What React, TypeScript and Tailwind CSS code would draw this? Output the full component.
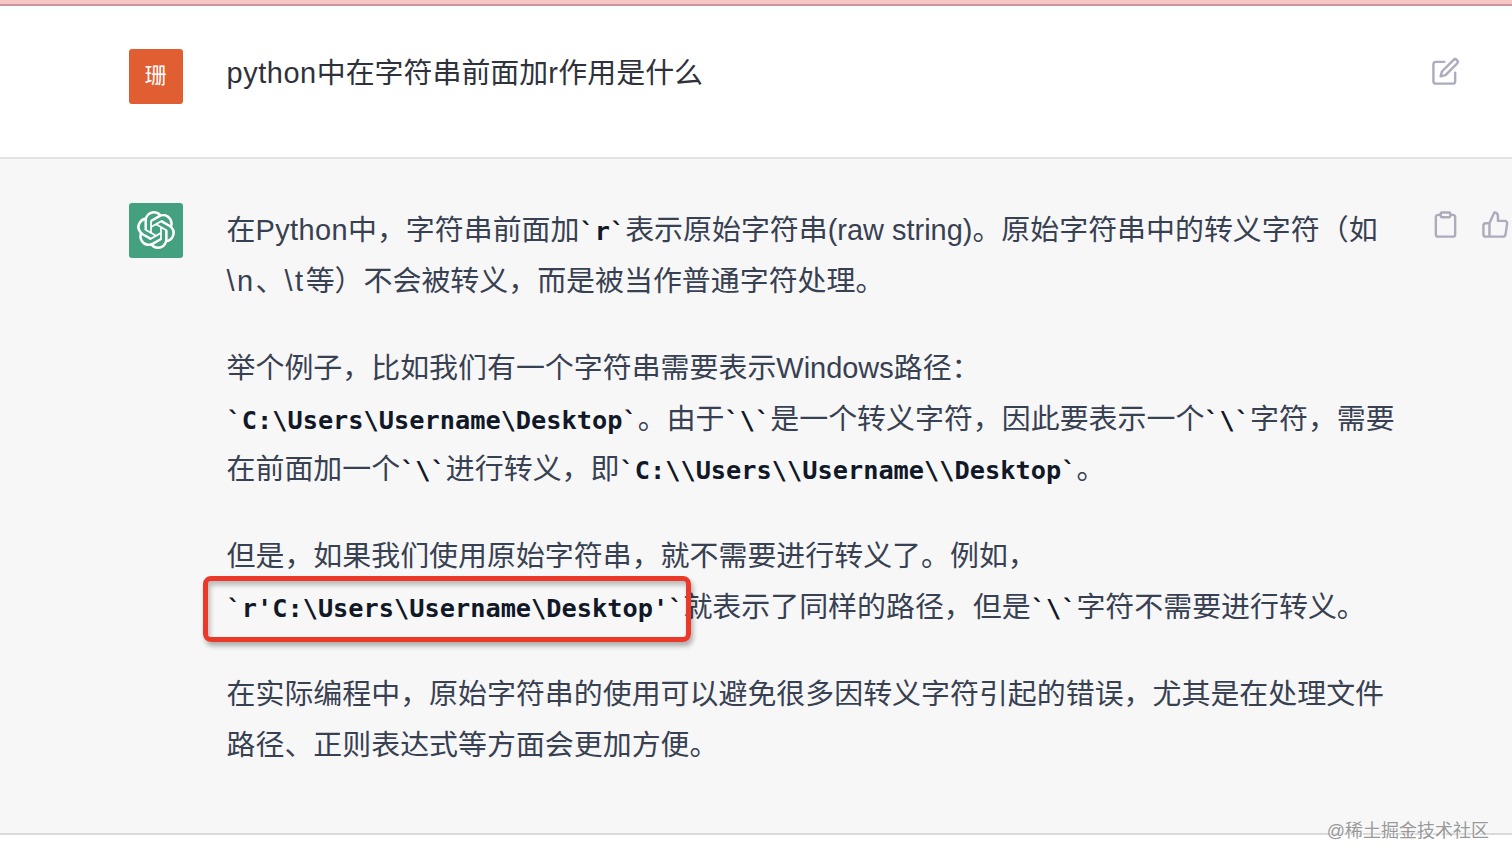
import type { ReactNode } from 'react';
import { SiOpenai } from 'react-icons/si';

interface IconProps {
  className?: string;
  children: ReactNode;
}

function Icon({ className, children }: IconProps) {
  return (
    <svg
      viewBox="0 0 24 24"
      fill="none"
      stroke="currentColor"
      strokeWidth="2"
      strokeLinecap="round"
      strokeLinejoin="round"
      className={`size-[29px] shrink-0 ${className ?? ''}`}
    >
      {children}
    </svg>
  );
}

function Code({ children }: { children: string }) {
  return (
    <code className="font-['DejaVu_Sans_Mono',monospace] text-[25.3px] leading-none font-bold text-[#111827]">
      {'`' + children + '`'}
    </code>
  );
}

function Line({ children }: { children: ReactNode }) {
  return <span className="block h-[50.8px] whitespace-nowrap">{children}</span>;
}

export default function App() {
  return (
    <div className="relative h-[864px] w-full overflow-hidden bg-white font-['Liberation_Sans','Noto_Sans_CJK_SC',sans-serif] text-[28.95px] leading-[50.8px]">
      <div className="h-[6px] border-b-2 border-[#c9979a] bg-[#f6c6c4]" />

      <section className="flex h-[153px] border-b-2 border-[#e2e2e4] pl-[128.5px] text-[#2f323b]">
        <div className="mt-[43px] flex size-[54.5px] shrink-0 items-center justify-center rounded-[3px] bg-[#e05e31] text-[22px] text-white">
          珊
        </div>
        <p className="mt-[41.5px] ml-[43.5px] w-[1204px] whitespace-nowrap">
          <span className="tracking-[0.55px]">python</span>中在字符串前面加<span className="tracking-[0.5px]">r</span>
          作用是什么
        </p>
        <Icon className="mt-[50.5px] text-[#acacbe]">
          <path d="M11 4H4a2 2 0 0 0-2 2v14a2 2 0 0 0 2 2h14a2 2 0 0 0 2-2v-7" />
          <path d="M18.5 2.5a2.121 2.121 0 0 1 3 3L12 15l-4 1 1-4 9.5-9.5z" />
        </Icon>
      </section>

      <section className="flex h-[676px] border-b-2 border-[#dadadc] bg-[#f7f7f8] pl-[128.5px] text-[#374151]">
        <div className="mt-[44px] flex size-[54.5px] shrink-0 items-center justify-center rounded-[3px] bg-[#43a17f] text-white">
          <SiOpenai className="size-[38px]" />
        </div>

        <div className="mt-[46px] ml-[43.5px] flex w-[1204px] shrink-0 flex-col gap-[36.2px]">
          <p>
            <Line>
              在<span className="tracking-[0.4px]">Python</span>中，字符串前面加<Code>r</Code>
              表示原始字符串(raw string)。原始字符串中的转义字符（如
            </Line>
            <Line>
              <span className="tracking-[2.4px]">\n</span>、<span className="tracking-[2.6px]">\t</span>
              等）不会被转义，而是被当作普通字符处理。
            </Line>
          </p>
          <p>
            <Line>举个例子，比如我们有一个字符串需要表示Windows路径：</Line>
            <Line>
              <Code>{'C:\\Users\\Username\\Desktop'}</Code>。由于<Code>{'\\'}</Code>
              是一个转义字符，因此要表示一个<Code>{'\\'}</Code>字符，需要
            </Line>
            <Line>
              在前面加一个<Code>{'\\'}</Code>进行转义，即
              <Code>{'C:\\\\Users\\\\Username\\\\Desktop'}</Code>。
            </Line>
          </p>
          <p>
            <Line>但是，如果我们使用原始字符串，就不需要进行转义了。例如，</Line>
            <Line>
              <span className="relative">
                <Code>{"r'C:\\Users\\Username\\Desktop'"}</Code>
                <span className="absolute -top-[15px] -left-[24px] z-10 h-[66px] w-[488px] rounded-[8px] border-5 border-[#ea3829] shadow-[2px_4px_5px_rgba(0,0,0,0.3),inset_2px_4px_5px_rgba(0,0,0,0.25)]" />
              </span>
              就表示了同样的路径，但是<Code>{'\\'}</Code>字符不需要进行转义。
            </Line>
          </p>
          <p>
            <Line>在实际编程中，原始字符串的使用可以避免很多因转义字符引起的错误，尤其是在处理文件</Line>
            <Line>路径、正则表达式等方面会更加方便。</Line>
          </p>
        </div>

        <div className="mt-[51px] flex gap-[21.5px] text-[#acacbe]">
          <Icon>
            <path d="M16 4h2a2 2 0 0 1 2 2v14a2 2 0 0 1-2 2H6a2 2 0 0 1-2-2V6a2 2 0 0 1 2-2h2" />
            <rect x="8" y="2" width="8" height="4" rx="1" ry="1" />
          </Icon>
          <Icon>
            <path d="M14 9V5a3 3 0 0 0-3-3l-4 9v11h11.28a2 2 0 0 0 2-1.7l1.38-9a2 2 0 0 0-2-2.3zM7 22H4a2 2 0 0 1-2-2v-7a2 2 0 0 1 2-2h3" />
          </Icon>
        </div>
      </section>

      <span className="absolute right-[23px] bottom-[19px] text-[18px] leading-[28px] whitespace-nowrap text-[#999] [text-shadow:1px_1px_0_#fff]">
        @稀土掘金技术社区
      </span>
    </div>
  );
}
